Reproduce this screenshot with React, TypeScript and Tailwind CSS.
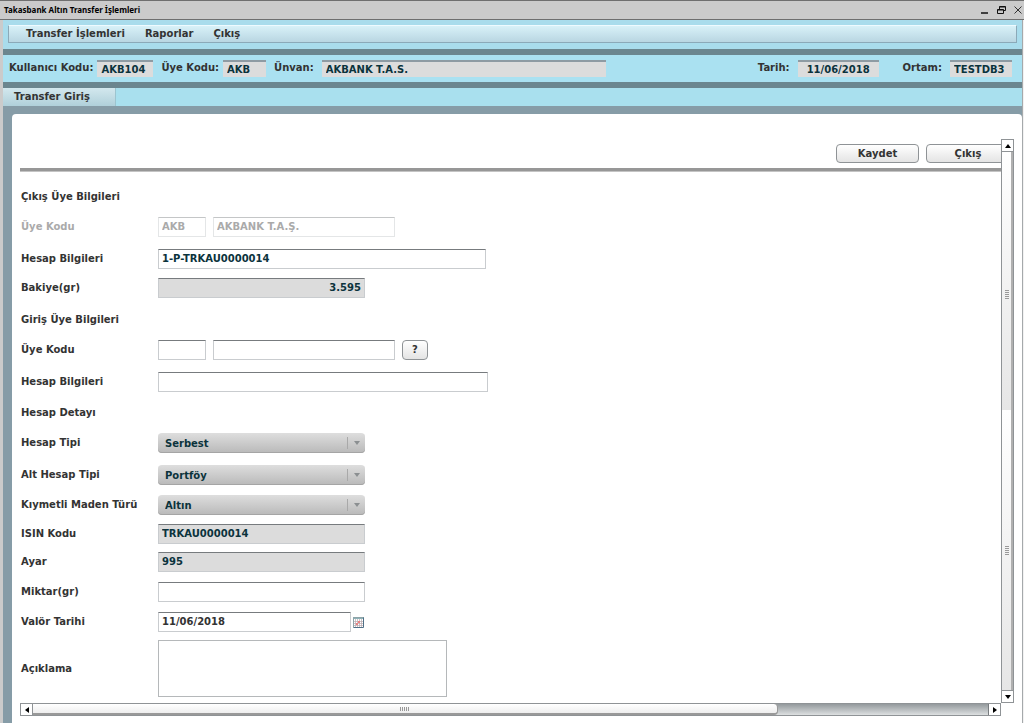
import { useState } from "react";
import type { ReactNode } from "react";

const fieldBase = "h-5 border border-[#c9cccf] border-t-[#777b7e] px-[3px] pb-[2px] text-[10px] font-bold outline-none";
const infoField = "h-[17px] min-w-0 border-t-2 border-[#8e9ba3] bg-[#dcdcdc] px-1 text-[10px] font-bold text-[#0b333c]";
const buttonBase = "rounded border border-[#8f9396] bg-linear-to-b from-white to-[#e4e4e4] pb-px text-[10px] font-bold";

type RowProps = {
    label: string;
    id?: string;
    className?: string;
    muted?: boolean;
    children?: ReactNode;
};

function Row({ label, id, className = "", muted = false, children }: RowProps) {
    return (
        <div className={`flex items-center ${className}`}>
            <label
                htmlFor={id}
                className={`w-[137px] shrink-0 leading-5 ${muted ? "text-[#aaaaaa]" : "text-[#333]"}`}
            >
                {label}
            </label>
            {children}
        </div>
    );
}

function Heading({ className = "", children }: { className?: string; children: ReactNode }) {
    return <h2 className={`leading-5 text-[#333] ${className}`}>{children}</h2>;
}

function SelectBox({ id, value }: { id: string; value: string }) {
    return (
        <div className="relative w-[207px]">
            <select
                id={id}
                className="block h-5 w-full appearance-none rounded bg-linear-to-b from-[#dedede] to-[#b9b9b9] px-[7px] text-[10px] font-bold text-[#0b333c] shadow-[inset_0_-1px_0_#a5a5a5]"
            >
                <option>{value}</option>
            </select>
            <span className="pointer-events-none absolute inset-y-1 right-0 flex w-[18px] items-center justify-center border-l border-[#a9a9a9]">
                <Arrow direction="down" className="text-[#8b8f91]" />
            </span>
        </div>
    );
}

const arrowPoints = {
    up: "0,5 6,5 3,1",
    down: "0,1 6,1 3,5",
    left: "5,0 5,6 1,3",
    right: "1,0 1,6 5,3",
};

function Arrow({ direction, className = "" }: { direction: keyof typeof arrowPoints; className?: string }) {
    return (
        <svg viewBox="0 0 6 6" className={`size-[6px] ${className}`} fill="currentColor">
            <polygon points={arrowPoints[direction]} />
        </svg>
    );
}

function Grip() {
    return (
        <svg viewBox="0 0 4 9" className="h-[9px] w-1" stroke="#999">
            <path d="M0 .5h4M0 2.5h4M0 4.5h4M0 6.5h4M0 8.5h4" />
        </svg>
    );
}

function VerticalScrollBar() {
    return (
        <div className="flex w-[13px] shrink-0 flex-col border border-[#8f9396] bg-white">
            <button type="button" aria-label="Yukarı kaydır" className="flex h-3 shrink-0 items-center justify-center border-b border-[#8f9396] text-black">
                <Arrow direction="up" />
            </button>
            <div className="flex min-h-0 flex-1 flex-col">
                <div className="flex h-[48%] flex-col items-center justify-center border-r-2 border-[#b0b0b0] bg-linear-to-b from-white to-[#e6e6e6] pt-[26px]">
                    <Grip />
                </div>
                <div className="flex flex-1 items-center justify-center border-r-2 border-[#b0b0b0] bg-linear-to-b from-white to-[#e6e6e6]">
                    <Grip />
                </div>
            </div>
            <button type="button" aria-label="Aşağı kaydır" className="flex h-3 shrink-0 items-center justify-center border-t border-[#8f9396] text-black">
                <Arrow direction="down" />
            </button>
        </div>
    );
}

function HorizontalScrollBar() {
    return (
        <div className="mr-[13px] flex h-[13px] shrink-0 border border-[#8f9396] bg-white">
            <button type="button" aria-label="Sola kaydır" className="flex w-3 shrink-0 items-center justify-center border-r border-[#8f9396] text-black">
                <Arrow direction="left" />
            </button>
            <div className="flex-1 bg-linear-to-b from-[#949a9d] to-[#dde0e1]">
                <div className="flex h-full w-[78%] items-center justify-center rounded-r border-r border-b-2 border-[#999] bg-linear-to-b from-white to-[#eeeeee]">
                    <svg viewBox="0 0 9 4" className="h-1 w-[9px]" stroke="#999">
                        <path d="M.5 0v4M2.5 0v4M4.5 0v4M6.5 0v4M8.5 0v4" />
                    </svg>
                </div>
            </div>
            <button type="button" aria-label="Sağa kaydır" className="flex w-3 shrink-0 items-center justify-center border-l border-[#777b7e] text-black">
                <Arrow direction="right" />
            </button>
        </div>
    );
}

function TitleBar() {
    return (
        <header className="flex h-5 shrink-0 items-center border-t border-b border-[#6f6f6f] bg-[#cbcbcb] pr-[2px] pl-1">
            <h1 className="flex-1 font-['Noto_Sans',sans-serif] text-[8px] font-bold text-black">
                Takasbank Altın Transfer İşlemleri
            </h1>
            <button type="button" aria-label="Simge durumuna küçült" className="mr-2">
                <svg viewBox="0 0 8 8" className="size-2" stroke="#111" fill="none">
                    <path d="M0 7h7" strokeWidth="1.5" />
                </svg>
            </button>
            <button type="button" aria-label="Önceki boyut" className="mr-2">
                <svg viewBox="0 0 9 8" className="h-2 w-[9px]" stroke="#111" fill="none">
                    <path d="M2.5 3V.5h6v4h-2M2.5 1h6M.5 3.5h6v4h-6zM.5 4h6" />
                </svg>
            </button>
            <button type="button" aria-label="Kapat">
                <svg viewBox="0 0 8 8" className="size-2" stroke="#333" fill="none">
                    <path d="M.5.5l7 7M7.5.5l-7 7" />
                </svg>
            </button>
        </header>
    );
}

function App() {
    const [account, setAccount] = useState("1-P-TRKAU0000014");
    const [valueDate, setValueDate] = useState("11/06/2018");

    return (
        <div className="flex h-screen flex-col overflow-hidden bg-[#f2f2f2] font-['DejaVu_Sans',sans-serif] text-[10px] font-bold text-[#333]">
            <TitleBar />

            <div className="mr-px flex min-h-0 flex-1 flex-col border-r border-l-[3px] border-r-[#a5a9ab] border-l-[#cbcbcb] bg-[#869ca7]">
                <div className="h-[29px] shrink-0 bg-[#a9dcec] px-[5px] pt-[5px]">
                    <nav className="flex h-[18px] items-center gap-5 border border-t-[#eefaff] border-r-[#8ba9b8] border-b-[#8ba9b8] border-l-[#8ba9b8] bg-linear-to-b from-[#d8f1f8] to-[#b9d6e2] pb-[2px] pl-[17px]">
                        <button type="button">Transfer İşlemleri</button>
                        <button type="button">Raporlar</button>
                        <button type="button">Çıkış</button>
                    </nav>
                </div>

                <div className="flex h-[39px] shrink-0 items-center border-y-[6px] border-[#6b868f] bg-[#aae1f1] pr-[10px] pl-[6px]">
                    <label htmlFor="userCode" className="mr-1 pb-[2px]">Kullanıcı Kodu:</label>
                    <input id="userCode" readOnly value="AKB104" className={`${infoField} mr-2 w-14`} />
                    <label htmlFor="memberCode" className="mr-1 pb-[2px]">Üye Kodu:</label>
                    <input id="memberCode" readOnly value="AKB" className={`${infoField} mr-2 w-[43px]`} />
                    <label htmlFor="memberTitle" className="mr-2 pb-[2px]">Ünvan:</label>
                    <input id="memberTitle" readOnly value="AKBANK T.A.S." className={`${infoField} w-[284px]`} />
                    <label htmlFor="today" className="mr-2 ml-auto pb-[2px]">Tarih:</label>
                    <input id="today" readOnly value="11/06/2018" className={`${infoField} mr-6 w-[81px] text-center`} />
                    <label htmlFor="environment" className="mr-2 pb-[2px]">Ortam:</label>
                    <input id="environment" readOnly value="TESTDB3" className={`${infoField} w-[62px]`} />
                </div>

                <div className="flex h-[18px] shrink-0 bg-[#a9e0ee]">
                    <button type="button" className="w-[113px] border-r border-[#9cc4cf] bg-linear-to-b from-[#d3e8ee] to-[#b0d0da] pb-[2px] pl-[11px] text-left">
                        Transfer Giriş
                    </button>
                </div>

                <main className="mt-2 ml-[9px] flex min-h-0 flex-1 flex-col rounded-t bg-white pt-[25px] pr-2 pb-[7px] pl-2">
                    <div className="flex min-h-0 flex-1">
                        <div className="min-w-0 flex-1 overflow-hidden">
                            <div className="flex h-[29px] justify-end gap-[7px] pt-[5px]">
                                <button type="button" className={`${buttonBase} h-[19px] w-[83px]`}>Kaydet</button>
                                <button type="button" className={`${buttonBase} -mr-[9px] h-[19px] w-[84px]`}>Çıkış</button>
                            </div>
                            <hr className="h-1 border-t-3 border-b border-t-[#979797] border-b-[#c4c4c4]" />

                            <form className="flex flex-col pl-px">
                                <Heading className="mt-[15px]">Çıkış Üye Bilgileri</Heading>
                                <Row label="Üye Kodu" id="outCode" muted className="mt-[10px]">
                                    <input id="outCode" disabled value="AKB" className="mr-[7px] h-5 w-12 border border-[#e4e6e7] border-t-[#c4c6c7] px-[3px] pb-[2px] text-[#aaaaaa]" />
                                    <input aria-label="Üye Adı" disabled value="AKBANK T.A.Ş." className="h-5 w-[182px] border border-[#e4e6e7] border-t-[#c4c6c7] px-[3px] pb-[2px] text-[#aaaaaa]" />
                                </Row>
                                <Row label="Hesap Bilgileri" id="outAccount" className="mt-3">
                                    <input
                                        id="outAccount"
                                        value={account}
                                        onChange={(e) => setAccount(e.target.value)}
                                        className={`${fieldBase} w-[328px] text-[#0b333c]`}
                                    />
                                </Row>
                                <Row label="Bakiye(gr)" id="balance" className="mt-[9px]">
                                    <input id="balance" readOnly value="3.595" className={`${fieldBase} w-[207px] bg-[#dcdcdc] text-right text-[#0b333c]`} />
                                </Row>

                                <Heading className="mt-3">Giriş Üye Bilgileri</Heading>
                                <Row label="Üye Kodu" id="inCode" className="mt-[10px]">
                                    <input id="inCode" className={`${fieldBase} mr-[7px] w-12`} />
                                    <input aria-label="Üye Adı" className={`${fieldBase} mr-[7px] w-[182px]`} />
                                    <button type="button" className={`${buttonBase} h-5 w-[26px]`}>?</button>
                                </Row>
                                <Row label="Hesap Bilgileri" id="inAccount" className="mt-3">
                                    <input id="inAccount" className={`${fieldBase} w-[330px]`} />
                                </Row>

                                <Heading className="mt-[11px]">Hesap Detayı</Heading>
                                <Row label="Hesap Tipi" id="accountType" className="mt-[10px]">
                                    <SelectBox id="accountType" value="Serbest" />
                                </Row>
                                <Row label="Alt Hesap Tipi" id="subType" className="mt-3">
                                    <SelectBox id="subType" value="Portföy" />
                                </Row>
                                <Row label="Kıymetli Maden Türü" id="metal" className="mt-[10px]">
                                    <SelectBox id="metal" value="Altın" />
                                </Row>
                                <Row label="ISIN Kodu" id="isin" className="mt-[9px]">
                                    <input id="isin" readOnly value="TRKAU0000014" className={`${fieldBase} w-[207px] bg-[#dcdcdc] text-[#0b333c]`} />
                                </Row>
                                <Row label="Ayar" id="carat" className="mt-2">
                                    <input id="carat" readOnly value="995" className={`${fieldBase} w-[207px] bg-[#dcdcdc] text-[#0b333c]`} />
                                </Row>
                                <Row label="Miktar(gr)" id="amount" className="mt-[10px]">
                                    <input id="amount" className={`${fieldBase} w-[207px]`} />
                                </Row>
                                <Row label="Valör Tarihi" id="valueDate" className="mt-[10px]">
                                    <input
                                        id="valueDate"
                                        value={valueDate}
                                        onChange={(e) => setValueDate(e.target.value)}
                                        className={`${fieldBase} mr-[2px] w-[193px]`}
                                    />
                                    <button type="button" aria-label="Takvim">
                                        <svg viewBox="0 0 11 11" className="size-[11px]">
                                            <path d="M0 0h11v11H0z" fill="#fff" />
                                            <path d="M0 0h11v2H0z" fill="#8fb3b8" />
                                            <path d="M2.5 2v9M4.5 2v9M6.5 2v9M8.5 2v9M0 4.5h11M0 6.5h11M0 8.5h11" stroke="#b9a9ad" strokeWidth=".7" />
                                            <path d="M5 4h2v2H5zM3 6h2v2H3z" fill="#e88383" />
                                            <path d="M.5 10.5V.5h10" fill="none" stroke="#8ea3a8" />
                                            <path d="M.5 10.5h10V.5" fill="none" stroke="#4f6f86" />
                                        </svg>
                                    </button>
                                </Row>
                                <Row label="Açıklama" id="description" className="mt-2">
                                    <textarea id="description" className="h-[57px] w-[289px] resize-none border border-[#b5b8ba] p-1 outline-none" />
                                </Row>
                            </form>
                        </div>
                        <VerticalScrollBar />
                    </div>
                    <HorizontalScrollBar />
                </main>
            </div>
        </div>
    );
}

export default App;
